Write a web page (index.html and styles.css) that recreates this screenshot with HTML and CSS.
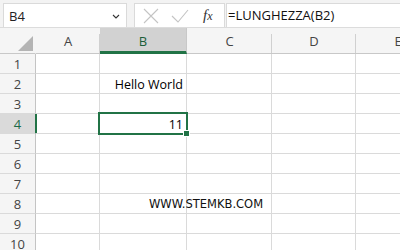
FILE: index.html
```html
<!DOCTYPE html>
<html lang="it">
<head>
<meta charset="UTF-8">
<title>Foglio1</title>
<link rel="stylesheet" href="styles.css">
</head>
<body>
<div class="bar">
    <div class="namebox">
        <span>B4</span>
        <svg class="chev" width="8" height="5" viewBox="0 0 8 5"><path d="M1 1l3 3 3-3" fill="none" stroke="#333" stroke-width="1.1"/></svg>
    </div>
    <div class="tools">
        <svg width="16" height="16" viewBox="0 0 16 16"><path d="M1 1l14 14M15 1L1 15" stroke="#c4c4c4" stroke-width="1.1"/></svg>
        <svg width="18" height="16" viewBox="0 0 18 16"><path d="M1 8l6 6L17 2" fill="none" stroke="#c4c4c4" stroke-width="1.1"/></svg>
        <span class="fx">f<i>x</i></span>
    </div>
    <div class="formula">=LUNGHEZZA(B2)</div>
</div>

<div class="sheet">
    <div class="hd corner"><div class="tri"></div></div>
    <div class="hd col">A</div>
    <div class="hd col sel">B</div>
    <div class="hd col">C</div>
    <div class="hd col">D</div>
    <div class="hd col">E</div>

    <div class="hd row">1</div><div class="c"></div><div class="c"></div><div class="c"></div><div class="c"></div><div class="c"></div>
    <div class="hd row">2</div><div class="c"></div><div class="c r">Hello World</div><div class="c"></div><div class="c"></div><div class="c"></div>
    <div class="hd row">3</div><div class="c"></div><div class="c"></div><div class="c"></div><div class="c"></div><div class="c"></div>
    <div class="hd row rsel">4</div><div class="c"></div><div class="c r active">11<span class="handle"></span></div><div class="c"></div><div class="c"></div><div class="c"></div>
    <div class="hd row">5</div><div class="c"></div><div class="c"></div><div class="c"></div><div class="c"></div><div class="c"></div>
    <div class="hd row">6</div><div class="c"></div><div class="c"></div><div class="c"></div><div class="c"></div><div class="c"></div>
    <div class="hd row">7</div><div class="c"></div><div class="c"></div><div class="c"></div><div class="c"></div><div class="c"></div>
    <div class="hd row">8</div><div class="c"></div><div class="c site">WWW.STEMKB.COM</div><div class="c"></div><div class="c"></div><div class="c"></div>
    <div class="hd row">9</div><div class="c"></div><div class="c"></div><div class="c"></div><div class="c"></div><div class="c"></div>
    <div class="hd row">10</div><div class="c"></div><div class="c"></div><div class="c"></div><div class="c"></div><div class="c"></div>
</div>
</body>
</html>
```

FILE: styles.css
```css
body{
    margin: 0;
    width: 400px;
    height: 250px;
    overflow: hidden;
    background: #fff;
    font-family: "Open Sans", sans-serif;
    color: #222;
}
.bar{
    display: flex;
    height: 28px;
    box-sizing: border-box;
    padding: 3px 0 0 3px;
    background: #f3f3f3;
    border-bottom: 1px solid #dcdcdc;
}
.namebox{
    width: 124px;
    box-sizing: border-box;
    background: #fff;
    border: 1px solid #dadada;
    border-bottom: none;
    display: flex;
    align-items: center;
    justify-content: space-between;
    padding: 0 6px 0 5px;
    font-size: 13px;
}
.chev{
    margin-top: 1px;
}
.tools{
    width: 91px;
    margin-left: 7px;
    box-sizing: border-box;
    background: #fff;
    border: 1px solid #dadada;
    border-bottom: none;
    display: flex;
    align-items: center;
    padding-left: 8px;
    gap: 12px;
}
.fx{
    font-family: "Liberation Serif", serif;
    font-style: italic;
    font-size: 15px;
    color: #333;
    margin-left: 2px;
}
.fx i{
    font-size: 12px;
}
.formula{
    flex: 1;
    margin-left: 1px;
    background: #fff;
    border-left: 1px solid #dadada;
    border-top: 1px solid #dadada;
    font-size: 13px;
    line-height: 23px;
    padding-left: 1px;
    color: #111;
}
.sheet{
    display: grid;
    grid-template-columns: 36px 64px 87px 85px 84px 84px;
    grid-template-rows: 26px;
    grid-auto-rows: 20px;
}
.hd{
    background: #f5f5f5;
    color: #444;
    font-size: 13px;
    display: flex;
    align-items: center;
    justify-content: center;
    box-sizing: border-box;
}
.corner{
    border-right: 1px solid #f5f5f5;
    border-bottom: 1px solid #c8c8c8;
    align-items: flex-end;
    justify-content: flex-end;
    padding: 0 2px 2px 0;
}
.tri{
    width: 15px;
    height: 15px;
    background: #b4b4b4;
    clip-path: polygon(100% 0, 100% 100%, 0 100%);
}
.col{
    border-bottom: 1px solid #c8c8c8;
    background: #f5f5f5 linear-gradient(#d0d0d0, #d0d0d0) right bottom / 1px 19px no-repeat;
    padding-top: 1px;
}
.col.sel{
    background: #d2d2d2;
    color: #1c5e39;
    border-bottom: 3px solid #217346;
    border-right: 1px solid #c8c8c8;
    padding-top: 3px;
}
.row{
    border-right: 1px solid #c4c4c4;
    border-bottom: 1px solid #dadada;
    padding-top: 1px;
}
.row.rsel{
    background: #dadada;
    color: #1c6b48;
    border-right: 2px solid #217346;
    margin-right: -1px;
}
.c{
    box-sizing: border-box;
    border-right: 1px solid #dadada;
    border-bottom: 1px solid #dadada;
    font-size: 12.5px;
    line-height: 21px;
    padding: 0 3px;
    color: #000;
    white-space: nowrap;
}
.r{
    text-align: right;
}
.active{
    position: relative;
}
.active::before{
    content: "";
    position: absolute;
    left: -2px;
    top: -2px;
    right: -2px;
    bottom: -2px;
    border: 2px solid #217346;
}
.handle{
    position: absolute;
    right: -4px;
    bottom: -4px;
    width: 5px;
    height: 5px;
    background: #217346;
    border: 1px solid #fff;
    z-index: 1;
}
.site{
    font-family: "DejaVu Sans", sans-serif;
    font-size: 11.5px;
    color: #111;
    padding-left: 49px;
    position: relative;
    z-index: 1;
}
```
